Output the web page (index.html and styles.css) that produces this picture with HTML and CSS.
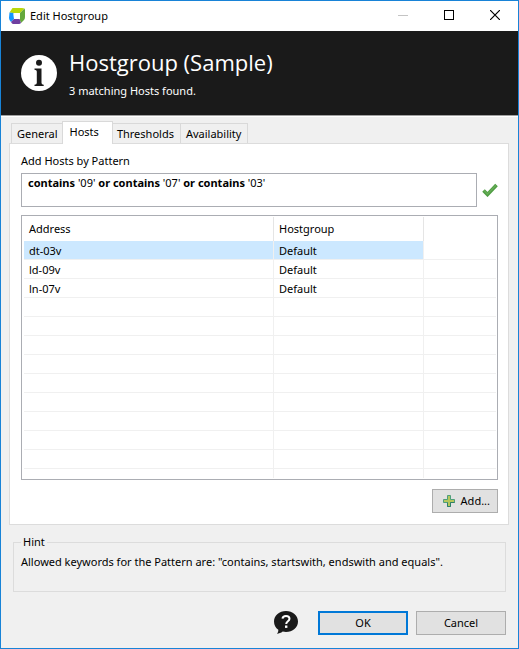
FILE: index.html
```html
<!DOCTYPE html>
<html lang="en">
<head>
<meta charset="utf-8">
<meta name="viewport" content="width=device-width, initial-scale=1">
<title>Edit Hostgroup</title>
<link rel="stylesheet" href="styles.css">
</head>
<body>
<div class="window">
  <div class="titlebar">
    <svg class="app-icon" viewBox="0 0 16 16" aria-hidden="true">
      <path d="M3.500 0H13L15.500.5 11 5H4L.5 4.500Z" fill="#b9d80a"/>
      <path d="M15.500.5 16 2V9Q16 11 15 12L12 15 10.500 11 11 5Z" fill="#64a83c"/>
      <path d="M.5 4.500 4.500 5 5 11 2 14Q0 12 0 10Z" fill="#1496ff"/>
      <path d="M5 11H10.500L12 15Q11 16 10 16H4Q3 16 2 14Z" fill="#6f3fa0"/>
      <path d="M4.500 5.500H11V11H5Z" fill="#fff"/>
    </svg>
    <span class="titlebar-text">Edit Hostgroup</span>
    <div class="window-controls">
      <button type="button" class="window-control" aria-label="Minimize" disabled>
        <svg viewBox="0 0 10 10"><path d="M0 5.500H10" stroke="#c4c4c4"/></svg>
      </button>
      <button type="button" class="window-control" aria-label="Maximize">
        <svg viewBox="0 0 10 10"><rect x=".5" y=".5" width="9" height="9" fill="none" stroke="#000"/></svg>
      </button>
      <button type="button" class="window-control" aria-label="Close">
        <svg viewBox="0 0 10 10"><path d="M0 0 10 10M10 0 0 10" stroke="#000" stroke-width="1.200"/></svg>
      </button>
    </div>
  </div>

  <header class="banner">
    <svg class="banner-icon" viewBox="0 0 36 36" aria-hidden="true">
      <circle cx="18" cy="18" r="18" fill="#fff"/>
      <circle cx="18" cy="7.800" r="3" fill="#1a1a1a"/>
      <path d="M13.500 13.500H20.500V28Q20.500 29.700 22.700 29.800V31H13.500V29.800Q15.800 29.500 15.800 28V16.500Q15.800 14.900 13.500 14.700Z" fill="#1a1a1a"/>
    </svg>
    <div class="banner-text">
      <h1>Hostgroup (Sample)</h1>
      <p>3 matching Hosts found.</p>
    </div>
  </header>

  <main class="content">
    <div class="tabs" role="tablist">
      <button type="button" class="tab" role="tab" aria-selected="false">General</button>
      <button type="button" class="tab tab-active" role="tab" id="tab-hosts" aria-selected="true" aria-controls="hosts-panel">Hosts</button>
      <button type="button" class="tab" role="tab" aria-selected="false">Thresholds</button>
      <button type="button" class="tab" role="tab" aria-selected="false">Availability</button>
    </div>

    <section class="panel" id="hosts-panel" role="tabpanel" aria-labelledby="tab-hosts">
      <div class="pattern-label" id="pattern-label">Add Hosts by Pattern</div>
      <div class="pattern-row">
        <div class="pattern-input" role="textbox" contenteditable="true" spellcheck="false" aria-multiline="true" aria-labelledby="pattern-label"><b>contains</b> '09' <b>or contains</b> '07' <b>or contains</b> '03'</div>
        <svg class="check-icon" viewBox="0 0 16 14" role="img" aria-label="Valid pattern">
          <path d="M1.500 7.500 5.500 11.500 14.500 2" fill="none" stroke="#4f9d43" stroke-width="3.600"/>
          <path d="M2 7.500 5.500 11 14 2.200" fill="none" stroke="#66ad57" stroke-width="1.400"/>
        </svg>
      </div>

      <div class="host-list">
        <table>
          <thead>
            <tr><th scope="col">Address</th><th scope="col">Hostgroup</th><td></td></tr>
          </thead>
          <tbody>
            <tr class="selected"><td>dt-03v</td><td>Default</td><td></td></tr>
            <tr><td>ld-09v</td><td>Default</td><td></td></tr>
            <tr><td>ln-07v</td><td>Default</td><td></td></tr>
            <tr><td></td><td></td><td></td></tr>
            <tr><td></td><td></td><td></td></tr>
            <tr><td></td><td></td><td></td></tr>
            <tr><td></td><td></td><td></td></tr>
            <tr><td></td><td></td><td></td></tr>
            <tr><td></td><td></td><td></td></tr>
            <tr><td></td><td></td><td></td></tr>
            <tr><td></td><td></td><td></td></tr>
            <tr><td></td><td></td><td></td></tr>
            <tr><td></td><td></td><td></td></tr>
          </tbody>
        </table>
      </div>

      <button type="button" class="button button-add">
        <svg class="plus-icon" viewBox="0 0 12 12" aria-hidden="true">
          <path d="M4.500.5H7.500V4.500H11.500V7.500H7.500V11.500H4.500V7.500H.5V4.500H4.500Z" fill="#b5c75c" stroke="#4e9f7b"/>
          <path d="M4.500 7.500V11.500H7.500V7.500H11.500" fill="none" stroke="#2f8068"/>
        </svg>
        Add...
      </button>
    </section>

    <fieldset class="hint">
      <legend>Hint</legend>
      <p>Allowed keywords for the Pattern are: "contains, startswith, endswith and equals".</p>
    </fieldset>
  </main>

  <footer class="actions">
    <button type="button" class="help" aria-label="Help">
      <svg viewBox="0 0 24 24">
        <path d="M12 0C18.600 0 24 4.500 24 10.500S18.600 21 12 21C10.800 21 9.800 20.900 8.700 20.600 7 22 5 22.700 2.800 22.800 4 21.800 4.400 20.500 4.300 18.800 1.600 16.800 0 14 0 10.500 0 4.500 5.400 0 12 0Z" fill="#1a1a1a"/>
        <path d="M8.500 7.600C8.700 5.600 10.200 4.900 12 4.900 14.100 4.900 15.500 6 15.500 7.800 15.500 10.300 12.200 10.200 12.200 13" fill="none" stroke="#fff" stroke-width="2"/>
        <rect x="11" y="14.500" width="2.400" height="2.400" fill="#fff"/>
      </svg>
    </button>
    <button type="button" class="button button-default">OK</button>
    <button type="button" class="button">Cancel</button>
  </footer>
</div>
</body>
</html>
```
FILE: styles.css
```css
* {
  box-sizing: border-box;
}

body {
  margin: 0;
  font: 11px/16px "Noto Sans", "Open Sans", sans-serif;
  color: #000;
}

button {
  font: inherit;
  color: inherit;
}

h1,
p {
  margin: 0;
  font-weight: 400;
}

svg {
  display: block;
  flex: none;
}

.window {
  display: flex;
  flex-direction: column;
  height: 100vh;
  min-height: 440px;
  border: 1px solid #1883d7;
  background: #f0f0f0;
}

.titlebar {
  display: flex;
  align-items: center;
  gap: 5px;
  height: 30px;
  padding-left: 8px;
  background: #fff;
}

.app-icon {
  width: 16px;
  height: 16px;
}

.window-controls {
  display: flex;
  height: 100%;
  margin-left: auto;
}

.window-control {
  display: grid;
  place-items: center;
  width: 46px;
  padding: 0 0 2px;
  border: 0;
  background: none;
}

.window-control svg {
  width: 10px;
  height: 10px;
}

.banner {
  display: flex;
  align-items: center;
  gap: 12px;
  height: 85px;
  padding: 0 20px;
  border-bottom: 1px solid #a0a0a0;
  background: #1a1a1a;
  color: #fff;
}

.banner-icon {
  width: 36px;
  height: 36px;
}

.banner-text h1 {
  font-family: "Open Sans", "Noto Sans", sans-serif;
  font-size: 22px;
  line-height: 30px;
}

.banner-text p {
  margin-top: 6px;
}

.content {
  display: flex;
  flex: 1;
  flex-direction: column;
  min-height: 0;
  padding: 4px 9px 0 8px;
  border-top: 1px solid #fff;
}

.tabs {
  display: flex;
  align-items: flex-end;
  padding-left: 2px;
}

.tab {
  height: 20px;
  padding: 0 6px 0 5px;
  border: 1px solid #d9d9d9;
  border-bottom: 0;
  border-left: 0;
  background: #f0f0f0;
  white-space: nowrap;
}

.tab:first-child {
  border-left: 1px solid #d9d9d9;
}

.tab-active {
  z-index: 1;
  height: 23px;
  margin: 0 -1px -1px -3px;
  padding: 0 13px 3px 7px;
  border-left: 1px solid #d9d9d9;
  background: #fff;
}

.panel {
  display: flex;
  flex: 1;
  flex-direction: column;
  min-height: 0;
  padding: 10px 10px 11px 11px;
  border: 1px solid #dcdcdc;
  background: #fff;
}

.pattern-label {
  line-height: 14px;
}

.pattern-row {
  display: flex;
  align-items: center;
  gap: 5px;
  margin: 5px 0 8px;
}

.pattern-input {
  flex: 1;
  min-height: 34px;
  padding: 1px 6px;
  border: 1px solid #abadb3;
  outline: 0;
}

.check-icon {
  width: 16px;
  height: 14px;
}

.host-list {
  flex: 1 1 0;
  min-height: 0;
  padding: 1px 1px 1px 2px;
  border: 1px solid #abadb3;
}

.host-list table {
  display: block;
  height: 100%;
  overflow: hidden;
  border-spacing: 0;
}

.host-list thead,
.host-list tbody {
  display: block;
}

.host-list tr {
  display: grid;
  grid-template-columns: 250px 150px 1fr;
}

.host-list th,
.host-list td {
  height: 19px;
  padding: 0 5px;
  border-right: 1px solid #f0f0f0;
  border-bottom: 1px solid #f0f0f0;
  font-weight: 400;
  line-height: 19px;
  text-align: left;
}

.host-list thead th,
.host-list thead td {
  height: 24px;
  border-right-color: #e5e5e5;
  border-bottom: 0;
  line-height: 24px;
}

.host-list tr > :last-child {
  border-right: 0;
}

.host-list .selected td:not(:last-child) {
  background: #cce8ff;
}

.button {
  width: 90px;
  height: 24px;
  padding: 0 4px;
  border: 1px solid #adadad;
  background: #e1e1e1;
}

.button-default {
  border: 2px solid #0078d7;
}

.button-add {
  display: flex;
  align-items: center;
  align-self: flex-end;
  justify-content: flex-end;
  gap: 6px;
  width: 66px;
  margin-top: 9px;
  padding: 0 7px;
}

.plus-icon {
  width: 12px;
  height: 12px;
}

.hint {
  height: 58px;
  margin: 9px 3px 0 4px;
  padding: 4px 7px 0;
  border: 1px solid #dcdcdc;
}

.hint legend {
  padding: 0 2px;
}

.actions {
  display: flex;
  align-items: center;
  justify-content: flex-end;
  gap: 8px;
  padding: 19px 12px 13px;
}

.help {
  margin-right: 12px;
  padding: 0;
  border: 0;
  background: none;
}

.help svg {
  width: 24px;
  height: 24px;
}
```
